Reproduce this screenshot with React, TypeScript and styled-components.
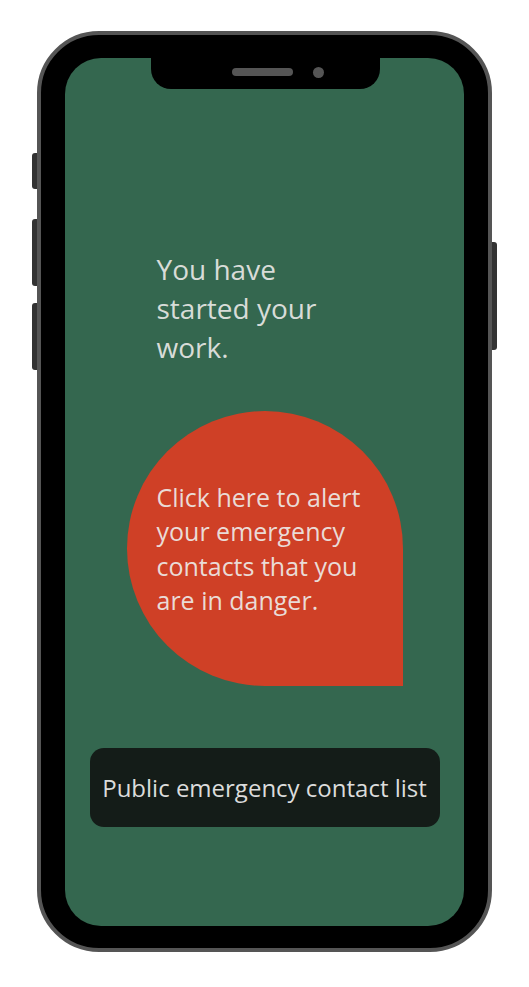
import React from "react";
import styled, { createGlobalStyle } from "styled-components";

const GlobalStyle = createGlobalStyle`
  html, body {
    margin: 0;
    padding: 0;
    background: #fff;
    font-family: "Open Sans", "Noto Sans", sans-serif;
  }
`;

const Page = styled.div`
  padding: 31px 0 0 37px;
  width: 529px;
  height: 987px;
  box-sizing: border-box;
`;

const Phone = styled.div`
  position: relative;
  box-sizing: border-box;
  width: 455px;
  height: 921px;
  padding: 23px 24px 22px;
  border: 4px solid #555;
  border-radius: 62px;
  background-color: #000;
`;

const SideButton = styled.div<{ side: "left" | "right"; top: number; height: number }>`
  position: absolute;
  top: ${(props) => props.top}px;
  ${(props) => (props.side === "left" ? "left: -9px;" : "right: -9px;")}
  width: 5px;
  height: ${(props) => props.height}px;
  background-color: #333;
  border-radius: ${(props) => (props.side === "left" ? "3px 0 0 3px" : "0 3px 3px 0")};
`;

const Screen = styled.main`
  position: relative;
  display: flex;
  flex-direction: column;
  align-items: center;
  height: 100%;
  border-radius: 36px;
  background-color: #34674f;
  overflow: hidden;
`;

const Notch = styled.div`
  position: absolute;
  top: 0;
  left: 86px;
  display: flex;
  align-items: center;
  gap: 20px;
  box-sizing: border-box;
  width: 229px;
  height: 31px;
  padding: 0 0 3px 81px;
  border-radius: 0 0 20px 20px;
  background-color: #000;
`;

const Speaker = styled.div`
  width: 61px;
  height: 8px;
  border-radius: 4px;
  background-color: #555;
`;

const Camera = styled.div`
  width: 11px;
  height: 11px;
  border-radius: 50%;
  background-color: #555;
`;

const Column = styled.div`
  box-sizing: border-box;
  width: 276px;
`;

const Heading = styled.h1`
  box-sizing: border-box;
  margin: 192px 0 0;
  padding: 0 30px;
  max-width: 260px;
  color: #d8dcd8;
  font-size: 28px;
  font-weight: 400;
  line-height: 39px;
`;

const AlertDrop = styled.button`
  display: flex;
  align-items: center;
  box-sizing: border-box;
  width: 276px;
  height: 275px;
  margin-top: 44px;
  padding: 0 30px;
  border: none;
  border-radius: 50% 50% 0 50%;
  background-color: #cf4026;
  color: #eadbd6;
  font-family: inherit;
  font-size: 25px;
  line-height: 34.5px;
  text-align: left;
  cursor: pointer;
`;

const ContactButton = styled.button`
  box-sizing: border-box;
  width: 350px;
  height: 79px;
  margin-top: 62px;
  border: none;
  border-radius: 14px;
  background-color: #141c18;
  color: #dcdcdc;
  font-family: inherit;
  font-size: 24px;
  cursor: pointer;
`;

export default function App() {
  return (
    <>
      <GlobalStyle />
      <Page>
        <Phone>
          <SideButton side="left" top={118} height={36} />
          <SideButton side="left" top={184} height={67} />
          <SideButton side="left" top={268} height={67} />
          <SideButton side="right" top={207} height={108} />
          <Screen>
            <Notch>
              <Speaker />
              <Camera />
            </Notch>
            <Column>
              <Heading>You have started your work.</Heading>
            </Column>
            <AlertDrop>Click here to alert your emergency contacts that you are in danger.</AlertDrop>
            <ContactButton>Public emergency contact list</ContactButton>
          </Screen>
        </Phone>
      </Page>
    </>
  );
}
